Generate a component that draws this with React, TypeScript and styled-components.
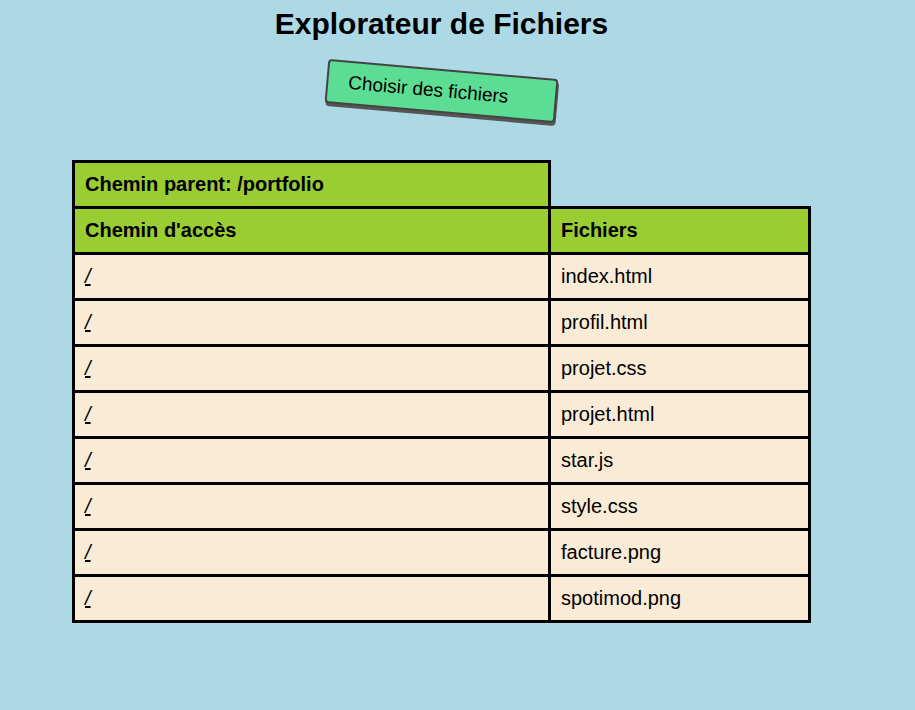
import React from 'react'
import styled, { createGlobalStyle } from 'styled-components'

const GlobalStyle = createGlobalStyle`
  html, body {
    margin: 0;
    padding: 0;
    background: lightblue;
    font-family: "Liberation Sans", Arial, sans-serif;
  }
  body {
    min-height: 710px;
  }
`

const Page = styled.div`
  width: 739px;
  margin-left: 72px;
  padding-top: 7px;
`

const Header = styled.header`
  display: flex;
  flex-direction: column;
  align-items: center;
`

const Title = styled.h1`
  margin: 0;
  font-size: 30px;
  line-height: 34px;
  font-weight: 700;
  color: #000;
`

const PickButton = styled.label`
  display: flex;
  align-items: center;
  box-sizing: border-box;
  width: 231px;
  height: 44px;
  margin-top: 28px;
  padding-left: 20px;
  background: #5cdd94;
  border: 2px solid #444;
  border-radius: 4px;
  box-shadow: 1px 3px 0 #555;
  transform: rotate(5deg);
  font-size: 19px;
  color: #000;
  cursor: pointer;

  input {
    display: none;
  }
`

const Table = styled.table`
  margin-top: 47px;
  width: 739px;
  border-collapse: collapse;
  font-size: 20px;
`

const Cell = styled.td<{ $head?: boolean; $w?: number }>`
  border: 3px solid #000;
  padding: 10px;
  line-height: 23px;
  text-align: left;
  background: ${p => (p.$head ? 'yellowgreen' : 'antiquewhite')};
  font-weight: ${p => (p.$head ? 700 : 400)};
  ${p => (p.$w ? `width: ${p.$w}px;` : '')}
  color: #000;
`

const PathLink = styled.a`
  color: #000;
  font-style: italic;
  text-decoration: underline;
`

const files = [
  'index.html',
  'profil.html',
  'projet.css',
  'projet.html',
  'star.js',
  'style.css',
  'facture.png',
  'spotimod.png',
]

export default function App() {
  return (
    <>
      <GlobalStyle />
      <Page>
        <Header>
          <Title>Explorateur de Fichiers</Title>
          <PickButton>
            Choisir des fichiers
            <input type="file" multiple />
          </PickButton>
        </Header>
        <Table>
          <tbody>
            <tr>
              <Cell as="th" $head $w={453}>Chemin parent: /portfolio</Cell>
            </tr>
            <tr>
              <Cell as="th" $head>Chemin d'accès</Cell>
              <Cell as="th" $head>Fichiers</Cell>
            </tr>
            {files.map(f => (
              <tr key={f}>
                <Cell><PathLink href="#">/</PathLink></Cell>
                <Cell>{f}</Cell>
              </tr>
            ))}
          </tbody>
        </Table>
      </Page>
    </>
  )
}
